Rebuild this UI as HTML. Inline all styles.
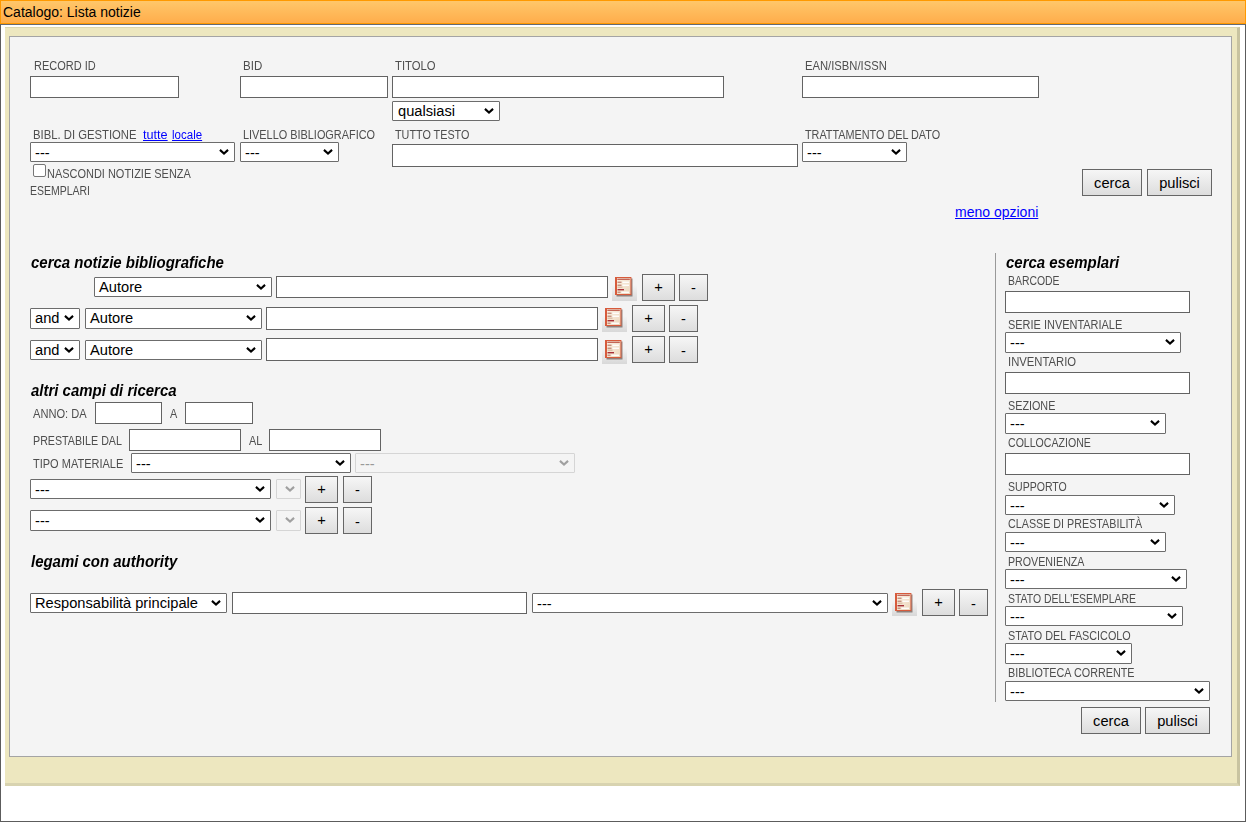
<!DOCTYPE html>
<html><head><meta charset="utf-8"><title>Catalogo: Lista notizie</title><style>
*{margin:0;padding:0;box-sizing:border-box}
html,body{width:1246px;height:822px;overflow:hidden;background:#fff;font-family:"Liberation Sans",sans-serif}
.t{position:absolute;white-space:nowrap;transform-origin:0 0}
.inp{position:absolute;background:#fff;border:1px solid #636363}
.sel{position:absolute;background:#fff;border:1px solid #6c6c6c;border-radius:1px;overflow:hidden}
.sel .st{position:absolute;left:4px;top:0;color:#000;white-space:nowrap}
.sel .cw{position:absolute;right:4px;top:6px;width:12px;height:8px}
.chev{display:block}
.sel.dis{background:#f4f4f4;border-color:#d5d5d5}
.sel.dis .st{color:#999}
.btn{position:absolute;border:1px solid #666;background:linear-gradient(#f6f6f6,#dddddd);text-align:center;color:#000;white-space:nowrap}
.ico{position:absolute;width:26px;height:24px}
a{color:#0000ff}
</style></head><body>
<div style="position:absolute;left:0px;top:0px;width:1246px;height:24px;border:1px solid #ff9900;background:linear-gradient(#ffc76a,#ffad4b)"></div>
<div class="t" style="left:3px;top:2.65px;font-size:14px;line-height:18px;color:#000">Catalogo: Lista notizie</div>
<div style="position:absolute;left:0px;top:24px;width:1246px;height:798px;border:1px solid #5c5c5c;border-top-color:#646a74;border-top:1px solid #646a74"></div>
<div style="position:absolute;left:5px;top:27px;width:1235px;height:759px;background:#ede7bf;border-right:3px solid #c8c3a0;border-bottom:3px solid #d8d3b0;border-top:1px solid #dcd7b0"></div>
<div style="position:absolute;left:9px;top:36px;width:1223px;height:721px;background:#f4f4f4;border:1px solid #a4a4a4"></div>
<div class="t" style="left:33.5px;top:58.84px;font-size:12px;line-height:14px;color:#4e4e4e;transform:scaleX(0.916)">RECORD ID</div>
<div class="t" style="left:242.5px;top:58.84px;font-size:12px;line-height:14px;color:#4e4e4e;transform:scaleX(0.96)">BID</div>
<div class="t" style="left:395px;top:58.84px;font-size:12px;line-height:14px;color:#4e4e4e;transform:scaleX(0.94)">TITOLO</div>
<div class="t" style="left:805px;top:58.84px;font-size:12px;line-height:14px;color:#4e4e4e;transform:scaleX(0.937)">EAN/ISBN/ISSN</div>
<div class="inp" style="left:30px;top:76px;width:149px;height:22px"></div>
<div class="inp" style="left:240px;top:76px;width:148px;height:22px"></div>
<div class="inp" style="left:392px;top:76px;width:332px;height:22px"></div>
<div class="inp" style="left:802px;top:76px;width:237px;height:22px"></div>
<div class="sel" style="left:392px;top:101px;width:108px;height:20px"><span class="st" style="left:5px;font-size:14.667px;line-height:18px;top:0px">qualsiasi</span><span class="cw"><svg class="chev" width="12" height="8" viewBox="0 0 12 8"><path d="M1.95 0.9 L6 4.5 L10.05 0.9" fill="none" stroke="#000" stroke-width="2.1"/></svg></span></div>
<div class="t" style="left:33px;top:127.84px;font-size:12px;line-height:14px;color:#4e4e4e;transform:scaleX(0.941)">BIBL. DI GESTIONE</div>
<div class="t" style="left:143.4px;top:126.84px;font-size:12px;line-height:16px;transform:scaleX(1.055)"><a href="#">tutte</a></div>
<div class="t" style="left:172.2px;top:126.84px;font-size:12px;line-height:16px;transform:scaleX(0.96)"><a href="#">locale</a></div>
<div class="t" style="left:242.7px;top:127.84px;font-size:12px;line-height:14px;color:#4e4e4e;transform:scaleX(0.908)">LIVELLO BIBLIOGRAFICO</div>
<div class="t" style="left:395px;top:127.84px;font-size:12px;line-height:14px;color:#4e4e4e;transform:scaleX(0.9)">TUTTO TESTO</div>
<div class="t" style="left:805px;top:127.84px;font-size:12px;line-height:14px;color:#4e4e4e;transform:scaleX(0.902)">TRATTAMENTO DEL DATO</div>
<div class="sel" style="left:30px;top:142px;width:205px;height:20px"><span class="st" style="left:4px;font-size:14.667px;line-height:18px;top:1px">---</span><span class="cw"><svg class="chev" width="12" height="8" viewBox="0 0 12 8"><path d="M1.95 0.9 L6 4.5 L10.05 0.9" fill="none" stroke="#000" stroke-width="2.1"/></svg></span></div>
<div class="sel" style="left:240px;top:142px;width:99px;height:20px"><span class="st" style="left:4px;font-size:14.667px;line-height:18px;top:1px">---</span><span class="cw"><svg class="chev" width="12" height="8" viewBox="0 0 12 8"><path d="M1.95 0.9 L6 4.5 L10.05 0.9" fill="none" stroke="#000" stroke-width="2.1"/></svg></span></div>
<div class="inp" style="left:392px;top:144px;width:406px;height:23px"></div>
<div class="sel" style="left:802px;top:142px;width:105px;height:20px"><span class="st" style="left:4px;font-size:14.667px;line-height:18px;top:1px">---</span><span class="cw"><svg class="chev" width="12" height="8" viewBox="0 0 12 8"><path d="M1.95 0.9 L6 4.5 L10.05 0.9" fill="none" stroke="#000" stroke-width="2.1"/></svg></span></div>
<div style="position:absolute;left:33px;top:164px;width:13px;height:13px;border:1px solid #767676;border-radius:2px;background:#fff"></div>
<div class="t" style="left:47px;top:166.84px;font-size:12px;line-height:14px;color:#4e4e4e;transform:scaleX(0.914)">NASCONDI NOTIZIE SENZA</div>
<div class="t" style="left:30px;top:183.84px;font-size:12px;line-height:14px;color:#4e4e4e;transform:scaleX(0.874)">ESEMPLARI</div>
<div class="btn" style="left:1082px;top:169px;width:60px;height:27px;line-height:27px;font-size:14.667px">cerca</div>
<div class="btn" style="left:1147px;top:169px;width:65px;height:27px;line-height:27px;font-size:14.667px">pulisci</div>
<div class="t" style="left:955px;top:202.75px;font-size:14px;line-height:18px;"><a href="#">meno opzioni</a></div>
<div class="t" style="left:31px;top:253.46px;font-size:16px;line-height:20px;font-weight:bold;font-style:italic;color:#000;transform:scaleX(0.935)">cerca notizie bibliografiche</div>
<div class="sel" style="left:94px;top:277px;width:178px;height:20px"><span class="st" style="left:4px;font-size:14.667px;line-height:18px;top:0px">Autore</span><span class="cw"><svg class="chev" width="12" height="8" viewBox="0 0 12 8"><path d="M1.95 0.9 L6 4.5 L10.05 0.9" fill="none" stroke="#000" stroke-width="2.1"/></svg></span></div>
<div class="inp" style="left:276px;top:276px;width:332px;height:22px"></div>
<div class="ico" style="left:612px;top:277px"><svg width="26" height="24" viewBox="0 0 26 24"><defs><linearGradient id="ig1" x1="0" y1="0" x2="0" y2="1"><stop offset="0" stop-color="#f4f4f4"/><stop offset="1" stop-color="#d8d8d8"/></linearGradient><filter id="bl1" x="-20%" y="-20%" width="140%" height="140%"><feGaussianBlur stdDeviation="0.7"/></filter><linearGradient id="pg1" x1="0" y1="0" x2="1" y2="1"><stop offset="0" stop-color="#fbf1e4"/><stop offset="1" stop-color="#ecd6bc"/></linearGradient></defs>
<rect x="0" y="8" width="25" height="16" fill="url(#ig1)"/>
<rect x="4.5" y="1.5" width="16" height="18" fill="#5a4038" opacity="0.6" filter="url(#bl1)"/>
<rect x="3" y="0" width="16.4" height="18" fill="#d75b3c"/>
<rect x="5" y="1" width="13.4" height="16" fill="url(#pg1)"/>
<rect x="5.3" y="1.6" width="12.5" height="1.3" fill="#b84838" opacity="0.9"/>
<rect x="5.5" y="4.6" width="4" height="1.3" fill="#c08a78"/><rect x="10.5" y="4.6" width="6.5" height="1.3" fill="#fff"/>
<rect x="5.5" y="7.6" width="4" height="1.3" fill="#c08a78"/><rect x="10.5" y="7.6" width="6.5" height="1.3" fill="#fff"/>
<rect x="5.5" y="9.6" width="5" height="1.2" fill="#d6b8a0"/>
<rect x="5.5" y="12" width="6.5" height="1.4" fill="#a83038"/>
<rect x="5.5" y="14.6" width="3" height="1.3" fill="#c08a78"/><rect x="9.5" y="14.6" width="7.5" height="1.3" fill="#fff"/>
</svg></div>
<div class="btn" style="left:642px;top:274px;width:33px;height:27px;line-height:25px;font-size:14.667px">+</div>
<div class="btn" style="left:679px;top:274px;width:29px;height:27px;line-height:25px;font-size:14.667px"><span style="position:relative;top:1px">-</span></div>
<div class="sel" style="left:30px;top:308px;width:50px;height:21px"><span class="st" style="left:4px;font-size:14.667px;line-height:19px;top:0px">and</span><span class="cw"><svg class="chev" width="12" height="8" viewBox="0 0 12 8"><path d="M1.95 0.9 L6 4.5 L10.05 0.9" fill="none" stroke="#000" stroke-width="2.1"/></svg></span></div>
<div class="sel" style="left:85px;top:308px;width:177px;height:21px"><span class="st" style="left:4px;font-size:14.667px;line-height:19px;top:0px">Autore</span><span class="cw"><svg class="chev" width="12" height="8" viewBox="0 0 12 8"><path d="M1.95 0.9 L6 4.5 L10.05 0.9" fill="none" stroke="#000" stroke-width="2.1"/></svg></span></div>
<div class="inp" style="left:266px;top:307px;width:332px;height:23px"></div>
<div class="ico" style="left:602px;top:308px"><svg width="26" height="24" viewBox="0 0 26 24"><defs><linearGradient id="ig2" x1="0" y1="0" x2="0" y2="1"><stop offset="0" stop-color="#f4f4f4"/><stop offset="1" stop-color="#d8d8d8"/></linearGradient><filter id="bl2" x="-20%" y="-20%" width="140%" height="140%"><feGaussianBlur stdDeviation="0.7"/></filter><linearGradient id="pg2" x1="0" y1="0" x2="1" y2="1"><stop offset="0" stop-color="#fbf1e4"/><stop offset="1" stop-color="#ecd6bc"/></linearGradient></defs>
<rect x="0" y="8" width="25" height="16" fill="url(#ig2)"/>
<rect x="4.5" y="1.5" width="16" height="18" fill="#5a4038" opacity="0.6" filter="url(#bl2)"/>
<rect x="3" y="0" width="16.4" height="18" fill="#d75b3c"/>
<rect x="5" y="1" width="13.4" height="16" fill="url(#pg2)"/>
<rect x="5.3" y="1.6" width="12.5" height="1.3" fill="#b84838" opacity="0.9"/>
<rect x="5.5" y="4.6" width="4" height="1.3" fill="#c08a78"/><rect x="10.5" y="4.6" width="6.5" height="1.3" fill="#fff"/>
<rect x="5.5" y="7.6" width="4" height="1.3" fill="#c08a78"/><rect x="10.5" y="7.6" width="6.5" height="1.3" fill="#fff"/>
<rect x="5.5" y="9.6" width="5" height="1.2" fill="#d6b8a0"/>
<rect x="5.5" y="12" width="6.5" height="1.4" fill="#a83038"/>
<rect x="5.5" y="14.6" width="3" height="1.3" fill="#c08a78"/><rect x="9.5" y="14.6" width="7.5" height="1.3" fill="#fff"/>
</svg></div>
<div class="btn" style="left:632px;top:305px;width:33px;height:27px;line-height:25px;font-size:14.667px">+</div>
<div class="btn" style="left:669px;top:305px;width:29px;height:27px;line-height:25px;font-size:14.667px"><span style="position:relative;top:1px">-</span></div>
<div class="sel" style="left:30px;top:340px;width:50px;height:20px"><span class="st" style="left:4px;font-size:14.667px;line-height:18px;top:0px">and</span><span class="cw"><svg class="chev" width="12" height="8" viewBox="0 0 12 8"><path d="M1.95 0.9 L6 4.5 L10.05 0.9" fill="none" stroke="#000" stroke-width="2.1"/></svg></span></div>
<div class="sel" style="left:85px;top:340px;width:177px;height:20px"><span class="st" style="left:4px;font-size:14.667px;line-height:18px;top:0px">Autore</span><span class="cw"><svg class="chev" width="12" height="8" viewBox="0 0 12 8"><path d="M1.95 0.9 L6 4.5 L10.05 0.9" fill="none" stroke="#000" stroke-width="2.1"/></svg></span></div>
<div class="inp" style="left:266px;top:338px;width:332px;height:23px"></div>
<div class="ico" style="left:602px;top:340px"><svg width="26" height="24" viewBox="0 0 26 24"><defs><linearGradient id="ig3" x1="0" y1="0" x2="0" y2="1"><stop offset="0" stop-color="#f4f4f4"/><stop offset="1" stop-color="#d8d8d8"/></linearGradient><filter id="bl3" x="-20%" y="-20%" width="140%" height="140%"><feGaussianBlur stdDeviation="0.7"/></filter><linearGradient id="pg3" x1="0" y1="0" x2="1" y2="1"><stop offset="0" stop-color="#fbf1e4"/><stop offset="1" stop-color="#ecd6bc"/></linearGradient></defs>
<rect x="0" y="8" width="25" height="16" fill="url(#ig3)"/>
<rect x="4.5" y="1.5" width="16" height="18" fill="#5a4038" opacity="0.6" filter="url(#bl3)"/>
<rect x="3" y="0" width="16.4" height="18" fill="#d75b3c"/>
<rect x="5" y="1" width="13.4" height="16" fill="url(#pg3)"/>
<rect x="5.3" y="1.6" width="12.5" height="1.3" fill="#b84838" opacity="0.9"/>
<rect x="5.5" y="4.6" width="4" height="1.3" fill="#c08a78"/><rect x="10.5" y="4.6" width="6.5" height="1.3" fill="#fff"/>
<rect x="5.5" y="7.6" width="4" height="1.3" fill="#c08a78"/><rect x="10.5" y="7.6" width="6.5" height="1.3" fill="#fff"/>
<rect x="5.5" y="9.6" width="5" height="1.2" fill="#d6b8a0"/>
<rect x="5.5" y="12" width="6.5" height="1.4" fill="#a83038"/>
<rect x="5.5" y="14.6" width="3" height="1.3" fill="#c08a78"/><rect x="9.5" y="14.6" width="7.5" height="1.3" fill="#fff"/>
</svg></div>
<div class="btn" style="left:632px;top:336px;width:33px;height:27px;line-height:25px;font-size:14.667px">+</div>
<div class="btn" style="left:669px;top:336px;width:29px;height:27px;line-height:25px;font-size:14.667px"><span style="position:relative;top:2px">-</span></div>
<div class="t" style="left:31px;top:381.46px;font-size:16px;line-height:20px;font-weight:bold;font-style:italic;color:#000;transform:scaleX(0.935)">altri campi di ricerca</div>
<div class="t" style="left:33.2px;top:406.84px;font-size:12px;line-height:14px;color:#4e4e4e;transform:scaleX(0.925)">ANNO: DA</div>
<div class="inp" style="left:95px;top:402px;width:67px;height:22px"></div>
<div class="t" style="left:170px;top:406.84px;font-size:12px;line-height:14px;color:#4e4e4e;transform:scaleX(0.905)">A</div>
<div class="inp" style="left:185px;top:402px;width:68px;height:22px"></div>
<div class="t" style="left:33.2px;top:433.84px;font-size:12px;line-height:14px;color:#4e4e4e;transform:scaleX(0.891)">PRESTABILE DAL</div>
<div class="inp" style="left:129px;top:429px;width:112px;height:22px"></div>
<div class="t" style="left:248.5px;top:433.84px;font-size:12px;line-height:14px;color:#4e4e4e;transform:scaleX(0.905)">AL</div>
<div class="inp" style="left:269px;top:429px;width:112px;height:22px"></div>
<div class="t" style="left:33.2px;top:456.84px;font-size:12px;line-height:14px;color:#4e4e4e;transform:scaleX(0.917)">TIPO MATERIALE</div>
<div class="sel" style="left:131px;top:453px;width:220px;height:20px"><span class="st" style="left:4px;font-size:14.667px;line-height:18px;top:1px">---</span><span class="cw"><svg class="chev" width="12" height="8" viewBox="0 0 12 8"><path d="M1.95 0.9 L6 4.5 L10.05 0.9" fill="none" stroke="#000" stroke-width="2.1"/></svg></span></div>
<div class="sel dis" style="left:355px;top:453px;width:220px;height:20px"><span class="st" style="left:4px;font-size:14.667px;line-height:18px;top:1px">---</span><span class="cw"><svg class="chev" width="12" height="8" viewBox="0 0 12 8"><path d="M1.95 0.9 L6 4.5 L10.05 0.9" fill="none" stroke="#a0a0a0" stroke-width="2.1"/></svg></span></div>
<div class="sel" style="left:30px;top:479px;width:241px;height:20px"><span class="st" style="left:4px;font-size:14.667px;line-height:18px;top:1px">---</span><span class="cw"><svg class="chev" width="12" height="8" viewBox="0 0 12 8"><path d="M1.95 0.9 L6 4.5 L10.05 0.9" fill="none" stroke="#000" stroke-width="2.1"/></svg></span></div>
<div class="sel dis" style="left:276px;top:479px;width:25px;height:20px"><span class="st" style="left:4px;font-size:14.667px;line-height:18px;top:0px"></span><span class="cw"><svg class="chev" width="12" height="8" viewBox="0 0 12 8"><path d="M1.95 0.9 L6 4.5 L10.05 0.9" fill="none" stroke="#a0a0a0" stroke-width="2.1"/></svg></span></div>
<div class="btn" style="left:305px;top:476px;width:33px;height:27px;line-height:25px;font-size:14.667px">+</div>
<div class="btn" style="left:343px;top:476px;width:29px;height:27px;line-height:25px;font-size:14.667px"><span style="position:relative;top:1px">-</span></div>
<div class="sel" style="left:30px;top:510px;width:241px;height:21px"><span class="st" style="left:4px;font-size:14.667px;line-height:19px;top:1px">---</span><span class="cw"><svg class="chev" width="12" height="8" viewBox="0 0 12 8"><path d="M1.95 0.9 L6 4.5 L10.05 0.9" fill="none" stroke="#000" stroke-width="2.1"/></svg></span></div>
<div class="sel dis" style="left:276px;top:510px;width:25px;height:21px"><span class="st" style="left:4px;font-size:14.667px;line-height:19px;top:0px"></span><span class="cw"><svg class="chev" width="12" height="8" viewBox="0 0 12 8"><path d="M1.95 0.9 L6 4.5 L10.05 0.9" fill="none" stroke="#a0a0a0" stroke-width="2.1"/></svg></span></div>
<div class="btn" style="left:305px;top:507px;width:33px;height:27px;line-height:25px;font-size:14.667px">+</div>
<div class="btn" style="left:343px;top:507px;width:29px;height:27px;line-height:25px;font-size:14.667px"><span style="position:relative;top:2px">-</span></div>
<div class="t" style="left:31px;top:552.46px;font-size:16px;line-height:20px;font-weight:bold;font-style:italic;color:#000;transform:scaleX(0.935)">legami con authority</div>
<div class="sel" style="left:30px;top:593px;width:197px;height:20px"><span class="st" style="left:4px;font-size:14.667px;line-height:18px;top:0px">Responsabilità principale</span><span class="cw"><svg class="chev" width="12" height="8" viewBox="0 0 12 8"><path d="M1.95 0.9 L6 4.5 L10.05 0.9" fill="none" stroke="#000" stroke-width="2.1"/></svg></span></div>
<div class="inp" style="left:232px;top:592px;width:295px;height:22px"></div>
<div class="sel" style="left:532px;top:593px;width:356px;height:20px"><span class="st" style="left:4px;font-size:14.667px;line-height:18px;top:1px">---</span><span class="cw"><svg class="chev" width="12" height="8" viewBox="0 0 12 8"><path d="M1.95 0.9 L6 4.5 L10.05 0.9" fill="none" stroke="#000" stroke-width="2.1"/></svg></span></div>
<div class="ico" style="left:892px;top:593px"><svg width="26" height="24" viewBox="0 0 26 24"><defs><linearGradient id="ig4" x1="0" y1="0" x2="0" y2="1"><stop offset="0" stop-color="#f4f4f4"/><stop offset="1" stop-color="#d8d8d8"/></linearGradient><filter id="bl4" x="-20%" y="-20%" width="140%" height="140%"><feGaussianBlur stdDeviation="0.7"/></filter><linearGradient id="pg4" x1="0" y1="0" x2="1" y2="1"><stop offset="0" stop-color="#fbf1e4"/><stop offset="1" stop-color="#ecd6bc"/></linearGradient></defs>
<rect x="0" y="8" width="25" height="15" fill="url(#ig4)"/>
<rect x="4.5" y="1.5" width="16" height="18" fill="#5a4038" opacity="0.6" filter="url(#bl4)"/>
<rect x="3" y="0" width="16.4" height="18" fill="#d75b3c"/>
<rect x="5" y="1" width="13.4" height="16" fill="url(#pg4)"/>
<rect x="5.3" y="1.6" width="12.5" height="1.3" fill="#b84838" opacity="0.9"/>
<rect x="5.5" y="4.6" width="4" height="1.3" fill="#c08a78"/><rect x="10.5" y="4.6" width="6.5" height="1.3" fill="#fff"/>
<rect x="5.5" y="7.6" width="4" height="1.3" fill="#c08a78"/><rect x="10.5" y="7.6" width="6.5" height="1.3" fill="#fff"/>
<rect x="5.5" y="9.6" width="5" height="1.2" fill="#d6b8a0"/>
<rect x="5.5" y="12" width="6.5" height="1.4" fill="#a83038"/>
<rect x="5.5" y="14.6" width="3" height="1.3" fill="#c08a78"/><rect x="9.5" y="14.6" width="7.5" height="1.3" fill="#fff"/>
</svg></div>
<div class="btn" style="left:922px;top:589px;width:33px;height:27px;line-height:25px;font-size:14.667px">+</div>
<div class="btn" style="left:959px;top:589px;width:29px;height:27px;line-height:25px;font-size:14.667px"><span style="position:relative;top:2px">-</span></div>
<div style="position:absolute;left:995px;top:253px;width:1px;height:449px;background:#999"></div>
<div class="t" style="left:1006px;top:253.46px;font-size:16px;line-height:20px;font-weight:bold;font-style:italic;color:#000;transform:scaleX(0.935)">cerca esemplari</div>
<div class="t" style="left:1008px;top:273.84px;font-size:12px;line-height:14px;color:#4e4e4e;transform:scaleX(0.869)">BARCODE</div>
<div class="inp" style="left:1005px;top:291px;width:185px;height:22px"></div>
<div class="t" style="left:1008px;top:317.84px;font-size:12px;line-height:14px;color:#4e4e4e;transform:scaleX(0.913)">SERIE INVENTARIALE</div>
<div class="sel" style="left:1005px;top:332px;width:176px;height:21px"><span class="st" style="left:4px;font-size:14.667px;line-height:19px;top:1px">---</span><span class="cw"><svg class="chev" width="12" height="8" viewBox="0 0 12 8"><path d="M1.95 0.9 L6 4.5 L10.05 0.9" fill="none" stroke="#000" stroke-width="2.1"/></svg></span></div>
<div class="t" style="left:1008px;top:355.34px;font-size:12px;line-height:14px;color:#4e4e4e;transform:scaleX(0.94)">INVENTARIO</div>
<div class="inp" style="left:1005px;top:372px;width:185px;height:22px"></div>
<div class="t" style="left:1008px;top:398.84px;font-size:12px;line-height:14px;color:#4e4e4e;transform:scaleX(0.899)">SEZIONE</div>
<div class="sel" style="left:1005px;top:413px;width:161px;height:21px"><span class="st" style="left:4px;font-size:14.667px;line-height:19px;top:1px">---</span><span class="cw"><svg class="chev" width="12" height="8" viewBox="0 0 12 8"><path d="M1.95 0.9 L6 4.5 L10.05 0.9" fill="none" stroke="#000" stroke-width="2.1"/></svg></span></div>
<div class="t" style="left:1008px;top:435.84px;font-size:12px;line-height:14px;color:#4e4e4e;transform:scaleX(0.881)">COLLOCAZIONE</div>
<div class="inp" style="left:1005px;top:453px;width:185px;height:22px"></div>
<div class="t" style="left:1008px;top:479.84px;font-size:12px;line-height:14px;color:#4e4e4e;transform:scaleX(0.879)">SUPPORTO</div>
<div class="sel" style="left:1005px;top:495px;width:170px;height:20px"><span class="st" style="left:4px;font-size:14.667px;line-height:18px;top:1px">---</span><span class="cw"><svg class="chev" width="12" height="8" viewBox="0 0 12 8"><path d="M1.95 0.9 L6 4.5 L10.05 0.9" fill="none" stroke="#000" stroke-width="2.1"/></svg></span></div>
<div class="t" style="left:1008px;top:516.84px;font-size:12px;line-height:14px;color:#4e4e4e;transform:scaleX(0.895)">CLASSE DI PRESTABILIT&Agrave;</div>
<div class="sel" style="left:1005px;top:532px;width:161px;height:20px"><span class="st" style="left:4px;font-size:14.667px;line-height:18px;top:1px">---</span><span class="cw"><svg class="chev" width="12" height="8" viewBox="0 0 12 8"><path d="M1.95 0.9 L6 4.5 L10.05 0.9" fill="none" stroke="#000" stroke-width="2.1"/></svg></span></div>
<div class="t" style="left:1008px;top:554.84px;font-size:12px;line-height:14px;color:#4e4e4e;transform:scaleX(0.889)">PROVENIENZA</div>
<div class="sel" style="left:1005px;top:569px;width:182px;height:20px"><span class="st" style="left:4px;font-size:14.667px;line-height:18px;top:1px">---</span><span class="cw"><svg class="chev" width="12" height="8" viewBox="0 0 12 8"><path d="M1.95 0.9 L6 4.5 L10.05 0.9" fill="none" stroke="#000" stroke-width="2.1"/></svg></span></div>
<div class="t" style="left:1008px;top:591.84px;font-size:12px;line-height:14px;color:#4e4e4e;transform:scaleX(0.871)">STATO DELL'ESEMPLARE</div>
<div class="sel" style="left:1005px;top:606px;width:178px;height:20px"><span class="st" style="left:4px;font-size:14.667px;line-height:18px;top:1px">---</span><span class="cw"><svg class="chev" width="12" height="8" viewBox="0 0 12 8"><path d="M1.95 0.9 L6 4.5 L10.05 0.9" fill="none" stroke="#000" stroke-width="2.1"/></svg></span></div>
<div class="t" style="left:1008px;top:628.84px;font-size:12px;line-height:14px;color:#4e4e4e;transform:scaleX(0.901)">STATO DEL FASCICOLO</div>
<div class="sel" style="left:1005px;top:643px;width:127px;height:21px"><span class="st" style="left:4px;font-size:14.667px;line-height:19px;top:1px">---</span><span class="cw"><svg class="chev" width="12" height="8" viewBox="0 0 12 8"><path d="M1.95 0.9 L6 4.5 L10.05 0.9" fill="none" stroke="#000" stroke-width="2.1"/></svg></span></div>
<div class="t" style="left:1008px;top:665.84px;font-size:12px;line-height:14px;color:#4e4e4e;transform:scaleX(0.899)">BIBLIOTECA CORRENTE</div>
<div class="sel" style="left:1005px;top:681px;width:205px;height:20px"><span class="st" style="left:4px;font-size:14.667px;line-height:18px;top:1px">---</span><span class="cw"><svg class="chev" width="12" height="8" viewBox="0 0 12 8"><path d="M1.95 0.9 L6 4.5 L10.05 0.9" fill="none" stroke="#000" stroke-width="2.1"/></svg></span></div>
<div class="btn" style="left:1081px;top:707px;width:60px;height:27px;line-height:27px;font-size:14.667px">cerca</div>
<div class="btn" style="left:1145px;top:707px;width:65px;height:27px;line-height:27px;font-size:14.667px">pulisci</div>
</body></html>
